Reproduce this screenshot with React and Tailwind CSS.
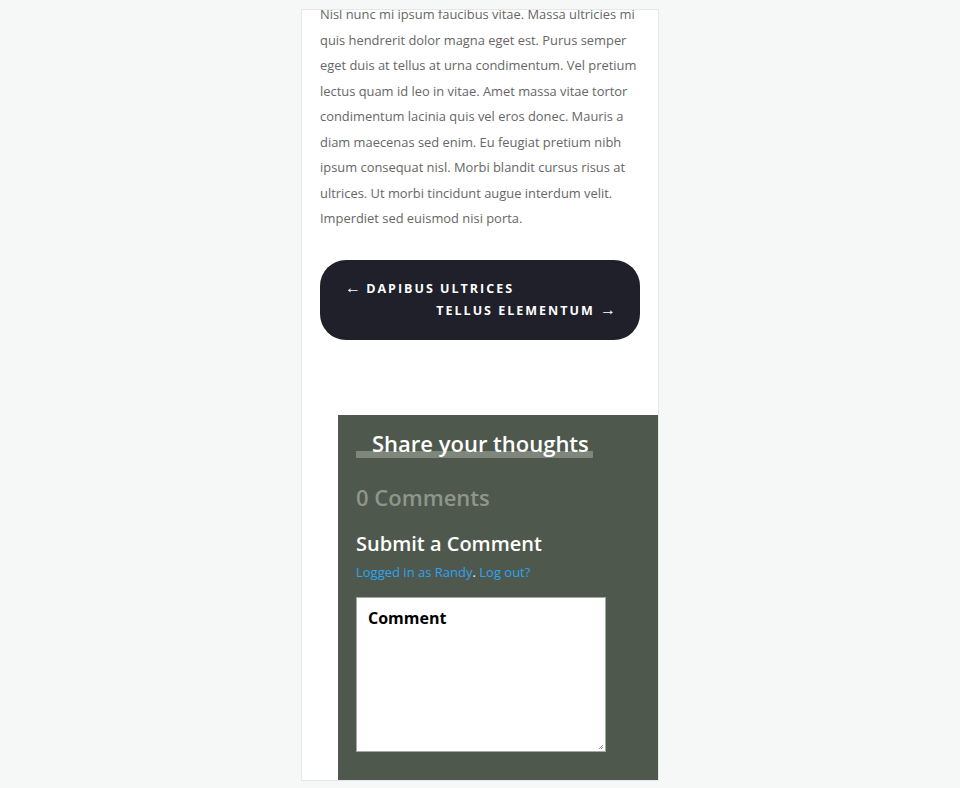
export default function App() {
  const font = { fontFamily: '"Open Sans", "Noto Sans", sans-serif' };
  return (
    <div className="min-h-[788px] w-[960px] bg-[#f6f8f7]" style={font}>
      <div className="w-[358px] pt-[9px] pb-[7px] ml-[301px]">
        <div className="bg-white border border-[#e6e8e7] h-[772px] overflow-hidden">
          <div className="pl-[18px] pr-[10px] -mt-[8px] text-[12.9px] leading-[25.5px] text-[#666]">
            <p>
              Nisl nunc mi ipsum faucibus vitae. Massa ultricies mi quis hendrerit dolor magna eget est. Purus semper eget duis at tellus at urna condimentum. Vel pretium lectus quam id leo in vitae. Amet massa vitae tortor condimentum lacinia quis vel eros donec. Mauris a diam maecenas sed enim. Eu feugiat pretium nibh ipsum consequat nisl. Morbi blandit cursus risus at ultrices. Ut morbi tincidunt augue interdum velit. Imperdiet sed euismod nisi porta.
            </p>
          </div>
          <div className="ml-[18px] mt-[28px] w-[320px] h-[80px] rounded-[26px] bg-[#1f2029] pl-[25px] pr-[26px] pt-[16px] text-white font-bold text-[12.5px] tracking-[2px] leading-[22px] uppercase">
            <div className="h-[22px]"><span className="text-[16px] leading-[22px] font-normal tracking-normal">←</span> Dapibus ultrices</div>
            <div className="h-[22px] text-right -mr-[2px]">Tellus elementum <span className="text-[16px] leading-[22px] font-normal tracking-normal">→</span></div>
          </div>
          <div className="ml-[36px] mt-[75px] w-[320px] h-[367px] bg-[#4f584d] pt-[13px] px-[18px]">
            <div className="relative w-[237px]">
              <div className="absolute left-0 right-0 top-[23px] h-[7px] bg-[#7f877d]"></div>
              <h2 className="relative pl-[16px] text-white font-semibold text-[22px] leading-[30px]">Share your thoughts</h2>
            </div>
            <div className="mt-[24px] text-[#8e968c] font-semibold text-[22px] leading-[30px]">0 Comments</div>
            <div className="mt-[18px] text-white font-semibold text-[20px] leading-[28px]">Submit a Comment</div>
            <div className="mt-[4px] text-[13px] leading-[20px] text-white">
              <span className="text-[#2ea3f2]">Logged in as Randy</span>.{" "}
              <span className="text-[#2ea3f2]">Log out?</span>
            </div>
            <div className="relative mt-[15px] w-[250px] h-[155px] bg-white border border-[#a3a8a2] px-[11px] pt-[8px]">
              <div className="text-black font-bold text-[16px] leading-[24px]">Comment</div>
              <svg className="absolute right-[1px] bottom-[1px]" width="6" height="6" viewBox="0 0 6 6">
                <path d="M5 1 L1 5 M5 3 L3 5" stroke="#999" strokeWidth="1" />
              </svg>
            </div>
          </div>
        </div>
      </div>
    </div>
  );
}
